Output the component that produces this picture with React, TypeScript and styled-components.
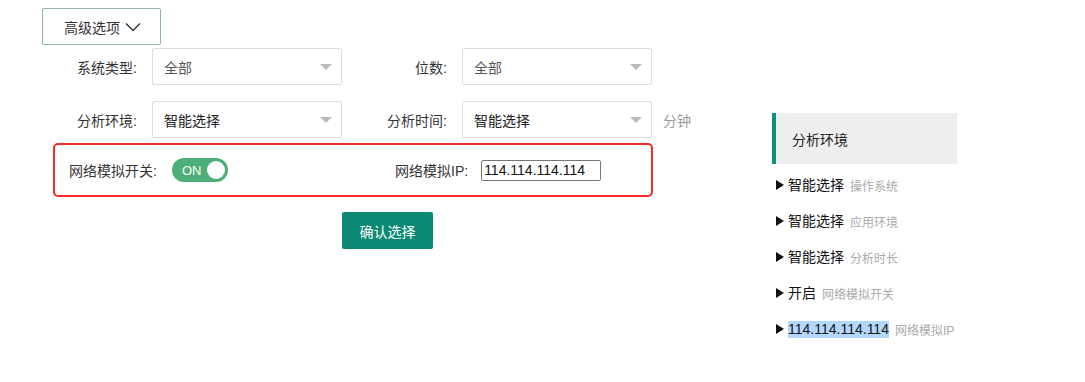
import React from "react";
import styled, { createGlobalStyle } from "styled-components";

const Global = createGlobalStyle`
  html, body { margin: 0; padding: 0; background: #fff; }
  body { font-family: "Liberation Sans", "Noto Sans CJK SC", sans-serif; font-size: 14px; color: #333; }
`;

const Page = styled.div`
  display: flex;
  align-items: flex-start;
  padding: 8px 0 0 42px;
`;

const LeftCol = styled.div`
  width: 730px;
  display: flex;
  flex-direction: column;
`;

const AdvButton = styled.button`
  width: 119px;
  height: 37px;
  box-sizing: border-box;
  border: 1px solid #8fb6ae;
  border-radius: 2px;
  background: #fff;
  color: #333;
  font: inherit;
  font-size: 14px;
  display: flex;
  align-items: center;
  justify-content: center;
  gap: 5px;
  padding: 0 0 0 2px;
`;

const FormRow = styled.div<{ $mt: number }>`
  display: flex;
  align-items: center;
  margin-top: ${(p) => p.$mt}px;
  height: 37px;
`;

const Label = styled.div<{ $w: number }>`
  width: ${(p) => p.$w}px;
  box-sizing: border-box;
  padding-right: 15px;
  text-align: right;
  color: #333;
  white-space: nowrap;
`;

const Select = styled.div<{ $dim?: boolean }>`
  width: 190px;
  height: 37px;
  box-sizing: border-box;
  border: 1px solid #ddd;
  border-radius: 2px;
  display: flex;
  align-items: center;
  justify-content: space-between;
  padding: 0 9px 0 11px;
  color: ${(p) => (p.$dim ? "#555" : "#222")};
`;

const Caret = styled.span`
  width: 0;
  height: 0;
  border-left: 6px solid transparent;
  border-right: 6px solid transparent;
  border-top: 6px solid #bbb;
`;

const Unit = styled.span`
  margin-left: 11px;
  color: #999;
`;

const RedBox = styled.div`
  margin: 5px 0 0 11px;
  width: 600px;
  height: 54px;
  box-sizing: border-box;
  border: 2px solid #f72a2a;
  border-radius: 5px;
  display: flex;
  align-items: center;
  padding-left: 14px;
`;

const SwitchGroup = styled.div`
  width: 326px;
  display: flex;
  align-items: center;
`;

const InlineLabel = styled.span<{ $mr: number }>`
  margin-right: ${(p) => p.$mr}px;
  color: #333;
  white-space: nowrap;
`;

const Toggle = styled.div`
  width: 56px;
  height: 24px;
  border-radius: 12px;
  background: #4caf78;
  display: flex;
  align-items: center;
  justify-content: space-between;
  padding: 0 3px 0 10px;
  box-sizing: border-box;
  color: #fff;
  font-size: 13px;
`;

const Knob = styled.span`
  width: 18px;
  height: 18px;
  border-radius: 50%;
  background: #fff;
`;

const IpInput = styled.input`
  width: 120px;
  height: 21px;
  box-sizing: border-box;
  border: 1px solid #767676;
  border-radius: 2px;
  padding: 1px 2px;
  font-family: "Liberation Sans", sans-serif;
  font-size: 14px;
  color: #111;
`;

const Confirm = styled.button`
  margin: 15px 0 0 300px;
  width: 91px;
  height: 37px;
  border: none;
  border-radius: 2px;
  background: #0a8a74;
  color: #fff;
  font: inherit;
  font-size: 14px;
`;

const Panel = styled.div`
  margin-top: 105px;
  width: 185px;
`;

const PanelHead = styled.div`
  height: 51px;
  background: #eee;
  border-left: 4px solid #0f8f7a;
  box-sizing: border-box;
  display: flex;
  align-items: center;
  padding-left: 16px;
  color: #222;
`;

const List = styled.ul`
  list-style: none;
  margin: 3px 0 0;
  padding: 0 0 0 4px;
`;

const Item = styled.li`
  height: 36px;
  display: flex;
  align-items: center;
  white-space: nowrap;
`;

const Arrow = styled.span`
  width: 0;
  height: 0;
  border-top: 5px solid transparent;
  border-bottom: 5px solid transparent;
  border-left: 8px solid #111;
  margin-right: 4px;
`;

const Value = styled.span<{ $hl?: boolean }>`
  color: #111;
  font-size: 14px;
  background: ${(p) => (p.$hl ? "#b3d7fd" : "transparent")};
  line-height: 17px;
`;

const Note = styled.span`
  margin-left: 6px;
  color: #aaa;
  font-size: 12px;
`;

const items = [
  { v: "智能选择", n: "操作系统" },
  { v: "智能选择", n: "应用环境" },
  { v: "智能选择", n: "分析时长" },
  { v: "开启", n: "网络模拟开关" },
  { v: "114.114.114.114", n: "网络模拟IP", hl: true },
];

export default function App() {
  return (
    <>
      <Global />
      <Page>
        <LeftCol>
          <AdvButton>
            高级选项
            <svg width="16" height="10" viewBox="0 0 16 10">
              <path d="M1 1.5 L8 8.5 L15 1.5" fill="none" stroke="#333" strokeWidth="1.3" />
            </svg>
          </AdvButton>
          <FormRow $mt={3}>
            <Label $w={110}>系统类型:</Label>
            <Select $dim>
              全部
              <Caret />
            </Select>
            <Label $w={120}>位数:</Label>
            <Select $dim>
              全部
              <Caret />
            </Select>
          </FormRow>
          <FormRow $mt={16}>
            <Label $w={110}>分析环境:</Label>
            <Select>
              智能选择
              <Caret />
            </Select>
            <Label $w={120}>分析时间:</Label>
            <Select>
              智能选择
              <Caret />
            </Select>
            <Unit>分钟</Unit>
          </FormRow>
          <RedBox>
            <SwitchGroup>
              <InlineLabel $mr={15}>网络模拟开关:</InlineLabel>
              <Toggle>
                ON
                <Knob />
              </Toggle>
            </SwitchGroup>
            <InlineLabel $mr={13}>网络模拟IP:</InlineLabel>
            <IpInput defaultValue="114.114.114.114" />
          </RedBox>
          <Confirm>确认选择</Confirm>
        </LeftCol>
        <Panel>
          <PanelHead>分析环境</PanelHead>
          <List>
            {items.map((it, i) => (
              <Item key={i}>
                <Arrow />
                <Value $hl={it.hl}>{it.v}</Value>
                <Note>{it.n}</Note>
              </Item>
            ))}
          </List>
        </Panel>
      </Page>
    </>
  );
}
